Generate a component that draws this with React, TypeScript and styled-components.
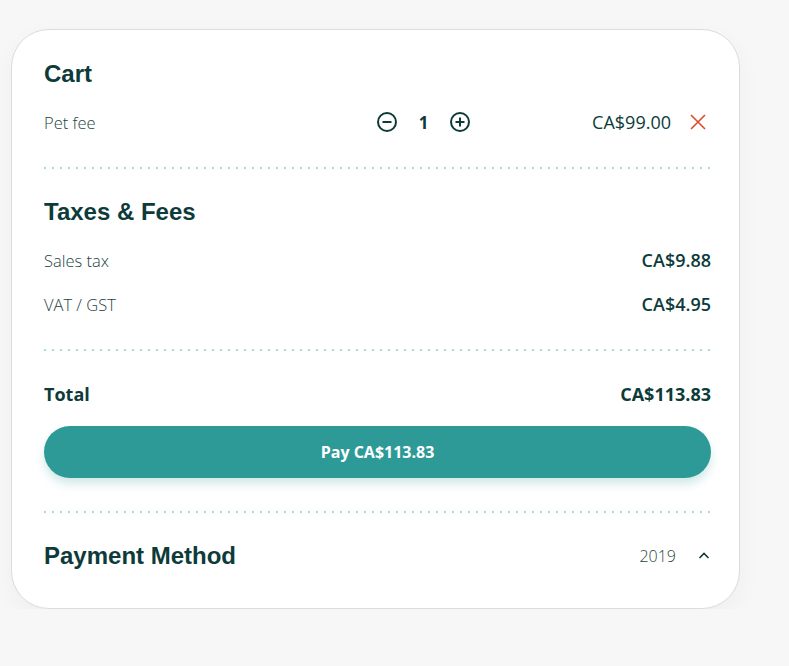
import React from 'react'
import styled, { createGlobalStyle } from 'styled-components'

const GlobalStyle = createGlobalStyle`
  html, body {
    margin: 0;
    padding: 0;
    background: #f7f7f7;
  }
  body {
    font-family: "Open Sans", sans-serif;
  }
`

const Page = styled.div`
  padding: 29px 0 0 11px;
  width: 729px;
`

const Card = styled.div`
  background: #ffffff;
  border: 1px solid #dcdcdc;
  border-radius: 38px;
  padding: 26px 28px 34px 32px;
  box-shadow: 0 8px 24px rgba(0, 0, 0, 0.04);
`

const Heading = styled.h2`
  margin: 0;
  font-family: "Liberation Sans", Arial, sans-serif;
  font-weight: 700;
  font-size: 24px;
  line-height: 36px;
  color: #0d3b3a;
`

const Row = styled.div`
  display: flex;
  align-items: center;
  justify-content: space-between;
  height: 44px;
  color: #0d3b3a;
`

const Label = styled.span<{ $bold?: boolean }>`
  font-size: ${p => (p.$bold ? '18px' : '16.5px')};
  font-weight: ${p => (p.$bold ? 700 : 300)};
  color: ${p => (p.$bold ? '#0d3b3a' : '#1f4343')};
`

const Amount = styled.span<{ $weight?: number }>`
  font-size: 18px;
  font-weight: ${p => p.$weight ?? 400};
  color: #0d3b3a;
`

const CartRow = styled(Row)`
  display: grid;
  grid-template-columns: 332px 95px 1fr;
  margin-top: 8px;
`

const Stepper = styled.div`
  display: flex;
  align-items: center;
  justify-content: space-between;
`

const Qty = styled.span`
  font-size: 17px;
  font-weight: 700;
  color: #0d3b3a;
`

const IconButton = styled.button`
  border: 0;
  background: none;
  padding: 0;
  display: flex;
  align-items: center;
  cursor: pointer;
`

const PriceCell = styled.div`
  display: flex;
  align-items: center;
  justify-content: flex-end;
  gap: 18px;
  padding-right: 4px;
`

const Divider = styled.div<{ $top: number; $bottom: number }>`
  height: 2px;
  background-image: linear-gradient(to right, #acdcd9 2px, transparent 2px);
  background-size: 8px 2px;
  background-repeat: repeat-x;
  margin: ${p => p.$top}px 0 ${p => p.$bottom}px;
`

const TaxRows = styled.div`
  margin-top: 8px;
`

const PayButton = styled.button`
  width: 100%;
  height: 52px;
  margin-top: 10px;
  border: 0;
  border-radius: 26px;
  background: #2e9a98;
  color: #ffffff;
  font-family: "Open Sans", sans-serif;
  font-size: 16px;
  font-weight: 700;
  box-shadow: 0 6px 10px rgba(46, 154, 152, 0.22);
  cursor: pointer;
`

const MethodRow = styled.div`
  display: flex;
  align-items: center;
  justify-content: space-between;
`

const MethodRight = styled.div`
  display: flex;
  align-items: center;
  gap: 22px;
  padding-right: 1px;
  color: #1f4343;
  font-size: 16px;
  font-weight: 300;
`

const Minus = () => (
  <svg width="22" height="22" viewBox="0 0 22 22" fill="none" stroke="#0d3b3a" strokeWidth="2">
    <circle cx="11" cy="11" r="9" />
    <path d="M6.5 11h9" />
  </svg>
)

const Plus = () => (
  <svg width="22" height="22" viewBox="0 0 22 22" fill="none" stroke="#0d3b3a" strokeWidth="2">
    <circle cx="11" cy="11" r="9" />
    <path d="M6.5 11h9M11 6.5v9" />
  </svg>
)

const Close = () => (
  <svg width="18" height="18" viewBox="0 0 18 18" fill="none" stroke="#e0492a" strokeWidth="1.6">
    <path d="M2 2l14 14M16 2L2 16" />
  </svg>
)

const ChevronUp = () => (
  <svg width="12" height="10" viewBox="0 0 12 10" fill="none" stroke="#0d3b3a" strokeWidth="1.6">
    <path d="M1.5 7l4.5-4.5 4.5 4.5" />
  </svg>
)

const App = () => {
  return (
    <>
      <GlobalStyle />
      <Page>
        <Card>
          <Heading>Cart</Heading>
          <CartRow>
            <Label>Pet fee</Label>
            <Stepper>
              <IconButton aria-label="decrease"><Minus /></IconButton>
              <Qty>1</Qty>
              <IconButton aria-label="increase"><Plus /></IconButton>
            </Stepper>
            <PriceCell>
              <Amount>CA$99.00</Amount>
              <IconButton aria-label="remove"><Close /></IconButton>
            </PriceCell>
          </CartRow>
          <Divider $top={23} $bottom={25} />

          <Heading>Taxes &amp; Fees</Heading>
          <TaxRows>
            <Row>
              <Label>Sales tax</Label>
              <Amount $weight={600}>CA$9.88</Amount>
            </Row>
            <Row>
              <Label>VAT / GST</Label>
              <Amount $weight={600}>CA$4.95</Amount>
            </Row>
          </TaxRows>
          <Divider $top={23} $bottom={21} />

          <Row>
            <Label $bold>Total</Label>
            <Amount $weight={700}>CA$113.83</Amount>
          </Row>
          <PayButton>Pay CA$113.83</PayButton>
          <Divider $top={33} $bottom={25} />

          <MethodRow>
            <Heading>Payment Method</Heading>
            <MethodRight>
              <span>2019</span>
              <ChevronUp />
            </MethodRight>
          </MethodRow>
        </Card>
      </Page>
    </>
  )
}

export default App
